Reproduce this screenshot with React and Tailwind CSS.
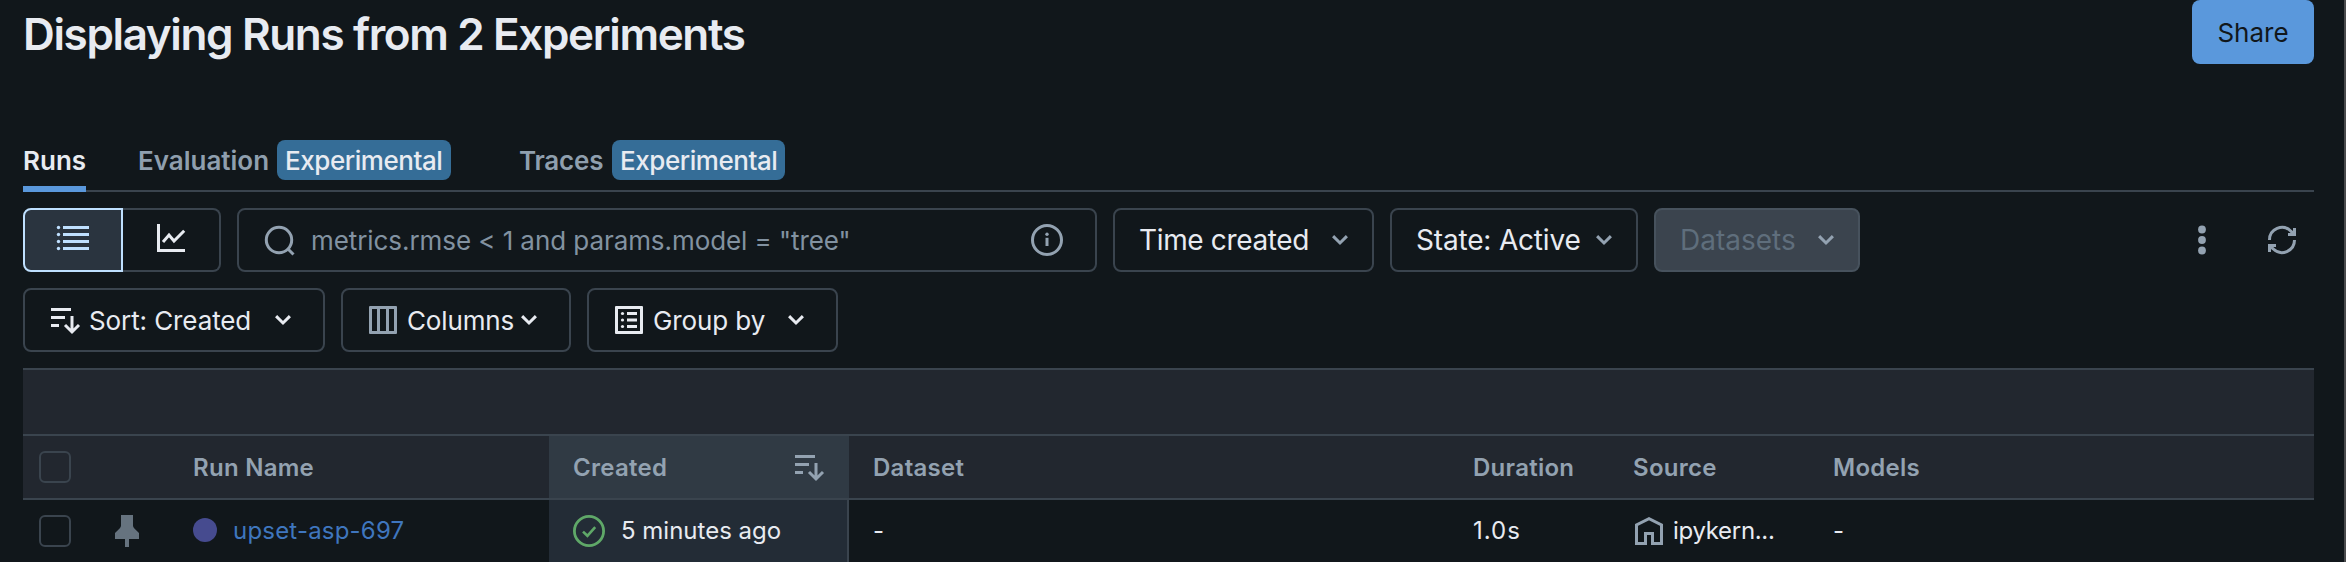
import React from "react";

function Chevron({ className = "" }) {
  return (
    <svg className={"h-3 w-4 shrink-0 " + className} viewBox="0 0 16 12" fill="none" stroke="currentColor" strokeWidth="3">
      <path d="M1.1 2.1 8 9l6.900-6.900" />
    </svg>
  );
}

function SortIcon({ className = "" }) {
  return (
    <svg className={"h-8 w-8 shrink-0 " + className} viewBox="0 0 32 32" fill="none" stroke="currentColor" strokeWidth="3">
      <path d="M2 5.500h20M2 13.500h14M2 21.500h8M23 12v16M16 21l7 7 7-7" />
    </svg>
  );
}

function ListIcon() {
  return (
    <svg className="h-8 w-9" viewBox="0 0 36 32" fill="currentColor">
      <path d="M8 2h26v3H8zM8 9h26v3H8zM8 16h26v3H8zM8 23h26v3H8z" />
      <circle cx="3.500" cy="3.500" r="1.700" />
      <circle cx="3.500" cy="10.500" r="1.700" />
      <circle cx="3.500" cy="17.500" r="1.700" />
      <circle cx="3.500" cy="24.500" r="1.700" />
    </svg>
  );
}

function ChartIcon() {
  return (
    <svg className="h-8 w-8" viewBox="0 0 32 32" fill="none" stroke="currentColor" strokeWidth="3">
      <path d="M3.500 0v26.500H30M8 18l6-7 5 6L29.200 6.800" />
    </svg>
  );
}

function SearchIcon() {
  return (
    <svg className="h-8 w-8 shrink-0" viewBox="0 0 32 32" fill="none" stroke="currentColor" strokeWidth="3">
      <circle cx="15" cy="16" r="12.700" />
      <path d="M24 25l5.500 5.500" />
    </svg>
  );
}

function InfoIcon() {
  return (
    <svg className="h-8 w-8 shrink-0" viewBox="0 0 16 16">
      <circle cx="8" cy="8" r="7.250" fill="none" stroke="currentColor" strokeWidth="1.500" />
      <path d="M7.250 6.900h1.500V11h-1.500z" fill="currentColor" />
      <circle cx="8" cy="5.100" r=".850" fill="currentColor" />
    </svg>
  );
}

function ColumnsIcon() {
  return (
    <svg className="h-8 w-8 shrink-0" viewBox="0 0 16 16" fill="currentColor">
      <path fillRule="evenodd" d="M1.500 1h13a.5.5 0 0 1 .5.5v13a.5.5 0 0 1-.5.5h-13a.5.5 0 0 1-.5-.5v-13a.5.5 0 0 1 .5-.5zM2.500 2.500v11H5v-11zM6.500 2.500v11h3v-11zM11 2.500v11h2.500v-11z" />
    </svg>
  );
}

function GroupIcon() {
  return (
    <svg className="h-8 w-8 shrink-0" viewBox="0 0 16 16" fill="currentColor">
      <path fillRule="evenodd" d="M1.500 1h13a.5.5 0 0 1 .5.5v13a.5.5 0 0 1-.5.5h-13a.5.5 0 0 1-.5-.5v-13a.5.5 0 0 1 .5-.5zM2.500 2.500v11h11v-11zM7 4h5v1.500H7zM7 7.250h5v1.500H7zM7 10.500h5V12H7z" />
      <circle cx="4.750" cy="4.750" r=".8" />
      <circle cx="4.750" cy="8" r=".8" />
      <circle cx="4.750" cy="11.250" r=".8" />
    </svg>
  );
}

function KebabIcon() {
  return (
    <svg className="h-8 w-8" viewBox="0 0 32 32" fill="currentColor">
      <circle cx="16" cy="5.500" r="3.900" />
      <circle cx="16" cy="16" r="3.900" />
      <circle cx="16" cy="26.500" r="3.900" />
    </svg>
  );
}

function RefreshIcon() {
  return (
    <svg className="h-8 w-8" viewBox="0 0 16 16" fill="currentColor">
      <path d="M1 8a7 7 0 0 1 11.850-5.050l.65.590V2H15v4h-4V4.500h1.330l-.51-.46A5.500 5.500 0 0 0 2.500 8zM15 8a7 7 0 0 1-11.850 5.050l-.65-.590V14H1v-4h4v1.500H3.670l.51.460A5.500 5.500 0 0 0 13.500 8z" />
    </svg>
  );
}

function PinIcon() {
  return (
    <svg className="h-8 w-8 text-[#66737f]" viewBox="0 0 16 16" fill="currentColor">
      <path d="M5 0h6v5.300c0 .6.300 1 .700 1.400L14 9v3H9v4H7v-4H2V9l2.300-2.300c.4-.4.700-.8.700-1.400z" />
    </svg>
  );
}

function CheckCircleIcon() {
  return (
    <svg className="h-8 w-8 shrink-0 text-[#5fa868]" viewBox="0 0 16 16" fill="none" stroke="currentColor">
      <circle cx="8" cy="8" r="7.300" strokeWidth="1.400" />
      <path d="M5 8.300l2.200 2.100 3.900-4.300" strokeWidth="1.300" />
    </svg>
  );
}

function HomeIcon() {
  return (
    <svg className="h-8 w-8 shrink-0 text-[#93a2b1]" viewBox="0 0 16 16" fill="none" stroke="currentColor" strokeWidth="1.500">
      <path d="M1.750 14.250V4.950L8 1.850l6.250 3.100v9.300h-4.500v-5h-3.500v5z" />
    </svg>
  );
}

function Badge({ children }) {
  return (
    <span className="flex h-10 items-center rounded-lg bg-[#356d97] pl-2 text-[26px] font-medium tracking-[-0.450px] text-[#e8ebf1]">
      {children}
    </span>
  );
}

const outline = "flex h-16 shrink-0 items-center rounded-lg border-2 border-[#3a444e]";

function Checkbox() {
  return <span className="h-8 w-8 rounded-md border-2 border-[#3a444e]" />;
}

function Tabs() {
  return (
    <nav className="flex h-16 items-stretch border-b-2 border-[#3a444e] text-[26px] font-semibold text-[#8f9fae]">
      <div className="-mb-0.5 flex w-[63px] items-center border-b-[6px] border-[#5a98dc] pt-[7px] text-[#e8ebf1]">Runs</div>
      <div className="ml-[52px] flex w-[381px] items-center pt-0.5">
        <span className="w-[139px] pt-px">Evaluation</span>
        <div className="grid w-[174px]"><Badge>Experimental</Badge></div>
      </div>
      <div className="flex items-center pt-0.5">
        <span className="w-[93px] pt-px tracking-[-0.200px]">Traces</span>
        <div className="grid w-[173px]"><Badge>Experimental</Badge></div>
      </div>
    </nav>
  );
}

function Toolbar() {
  return (
    <div className="flex h-16 items-center">
      <div className="flex h-16 w-[198px] shrink-0">
        <div className="flex w-[100px] items-center justify-center rounded-l-lg border-2 border-[#bfe0ff] bg-[#2a343f] text-[#bfe0ff]">
          <ListIcon />
        </div>
        <div className="flex w-[98px] items-center justify-center rounded-r-lg border-2 border-l-0 border-[#3a444e] text-[#e8ebf1]">
          <ChartIcon />
        </div>
      </div>
      <div className={outline + " ml-4 w-[860px] pl-[25px] pr-8 text-[26px] text-[#93a2b1]"}>
        <SearchIcon />
        <span className="ml-[15px] flex-1 whitespace-nowrap pt-px tracking-[-0.070px] text-[#8292a1]">metrics.rmse &lt; 1 and params.model = "tree"</span>
        <InfoIcon />
      </div>
      <div className={outline + " ml-4 w-[261px] justify-between pl-6 pr-6 text-[28px] text-[#e8ebf1]"}>
        <span className="whitespace-nowrap tracking-[-0.350px]">Time created</span>
        <Chevron className="text-[#93a2b1]" />
      </div>
      <div className={outline + " ml-4 w-[248px] justify-between pl-6 pr-6 text-[28px] text-[#e8ebf1]"}>
        <span className="whitespace-nowrap tracking-[-0.180px]">State: Active</span>
        <Chevron className="text-[#93a2b1]" />
      </div>
      <div className="ml-4 flex h-16 w-[206px] shrink-0 items-center justify-between rounded-lg border-2 border-[#47525d] bg-[#3b444e] pl-6 pr-6 text-[28px] text-[#5f6e7c]">
        <span>Datasets</span>
        <Chevron className="text-[#93a2b1]" />
      </div>
      <div className="ml-auto mr-4 flex gap-12 text-[#93a2b1]">
        <KebabIcon />
        <RefreshIcon />
      </div>
    </div>
  );
}

function Controls() {
  return (
    <div className="mt-4 flex gap-4 text-[26px] text-[#e8ebf1]">
      <div className={outline + " w-[302px] pl-6"}>
        <SortIcon />
        <span className="ml-2 w-[186px] pt-px tracking-[-0.100px]">Sort: Created</span>
        <Chevron />
      </div>
      <div className={outline + " w-[230px] pl-6"}>
        <span className="text-[#93a2b1]"><ColumnsIcon /></span>
        <span className="ml-2 w-[114px] pt-px tracking-[-0.150px]">Columns</span>
        <Chevron />
      </div>
      <div className={outline + " w-[251px] pl-6"}>
        <GroupIcon />
        <span className="ml-2 w-[135px] pt-px tracking-[-0.100px]">Group by</span>
        <Chevron />
      </div>
    </div>
  );
}

const row = "grid grid-cols-[88px_82px_356px_300px_600px_160px_201px_1fr] text-[24px]";

function RunsTable() {
  return (
    <div className="mt-4 border-t-2 border-[#3a444e]">
      <div className="h-[66px] border-b-2 border-[#3a444e] bg-[#22272f]" />
      <div className={row + " h-16 items-stretch border-b-2 border-[#3a444e] bg-[#22272f] font-semibold tracking-[0.270px] text-[#93a2b1] *:flex *:items-center"}>
        <div className="pl-4"><Checkbox /></div>
        <div />
        <div className="pt-0.5">Run Name</div>
        <div className="justify-between bg-[#303a44] pl-6 pr-6">
          <span className="pt-0.5">Created</span>
          <SortIcon />
        </div>
        <div className="pl-6 pt-0.5">Dataset</div>
        <div className="pl-6 pt-0.5">Duration</div>
        <div className="pl-6 pt-0.5">Source</div>
        <div className="pl-[23px] pt-0.5">Models</div>
      </div>
      <div className={row + " h-[62px] items-stretch text-[#e8ebf1] *:flex *:items-center"}>
        <div className="pl-4"><Checkbox /></div>
        <div><PinIcon /></div>
        <div>
          <span className="mb-0.5 h-6 w-6 rounded-full bg-[#464b8f]" />
          <span className="ml-4 tracking-[0.200px] text-[#3f76be]">upset-asp-697</span>
        </div>
        <div className="border-r-2 border-[#3a444e] bg-[#232c36] pl-6">
          <CheckCircleIcon />
          <span className="ml-4">5 minutes ago</span>
        </div>
        <div className="pl-6">-</div>
        <div className="pl-6 tracking-[1px]">1.0s</div>
        <div className="pl-6">
          <HomeIcon />
          <span className="ml-2 tracking-[-0.300px]">ipykern...</span>
        </div>
        <div className="pl-[23px]">-</div>
      </div>
    </div>
  );
}

export default function App() {
  return (
    <div className="flex h-[562px] w-[2346px] flex-col overflow-hidden border-r-2 border-[#4a4b4d] bg-[#11171b] pl-[23px] pr-[30px] font-['Inter',sans-serif]">
      <header className="flex h-16 shrink-0 items-center justify-between">
        <h1 className="pt-[3px] text-[44px] font-semibold leading-none tracking-[-1.360px] text-[#e8ebf1]">
          Displaying Runs from 2 Experiments
        </h1>
        <button className="flex h-16 w-[122px] items-center justify-center rounded-lg bg-[#5a98dc] text-[26px] text-[#11171b]">Share</button>
      </header>
      <div className="mt-16 shrink-0"><Tabs /></div>
      <div className="mt-4 shrink-0"><Toolbar /></div>
      <Controls />
      <RunsTable />
    </div>
  );
}
